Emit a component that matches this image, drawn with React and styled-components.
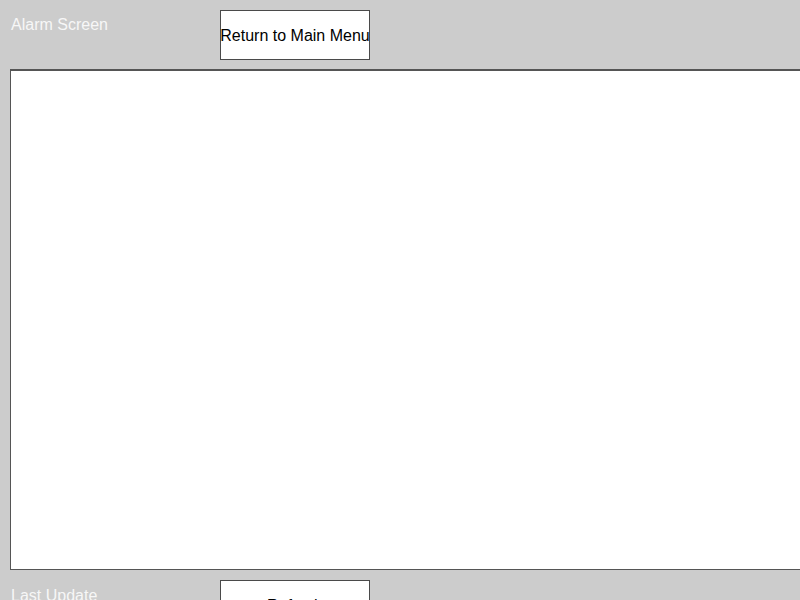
import styled, { createGlobalStyle } from 'styled-components';

const GlobalStyle = createGlobalStyle`
  html, body {
    margin: 0;
    padding: 0;
    width: 800px;
    height: 600px;
    overflow: hidden;
    background: #cccccc;
    font-family: "Liberation Sans", Arial, sans-serif;
  }
`;

const Screen = styled.div`
  display: flex;
  flex-direction: column;
  gap: 10px;
  padding: 10px;
  width: 800px;
  box-sizing: border-box;
`;

const Row = styled.div`
  display: flex;
  align-items: flex-start;
`;

const Label = styled.div`
  width: 209px;
  padding: ${(props) => props.offset || 6}px 0 0 1px;
  color: #f7f7f7;
  font-size: 16px;
  line-height: 18px;
`;

const Botao = styled.button`
  width: 150px;
  height: 50px;
  padding: 2px 0 0 0;
  margin: 0;
  box-sizing: border-box;
  border: 1px solid #4a4a4a;
  background: #ffffff;
  color: #000000;
  font-family: "Liberation Sans", Arial, sans-serif;
  font-size: 16px;
  white-space: nowrap;
  display: flex;
  align-items: center;
  justify-content: center;
  cursor: pointer;
`;

const Painel = styled.div`
  width: 800px;
  height: 501px;
  box-sizing: border-box;
  border: 1px solid #555555;
  border-top-width: 2px;
  margin-top: -1px;
  background: #ffffff;
  flex-shrink: 0;
`;

export default function App() {
  return (
    <>
      <GlobalStyle />
      <Screen>
        <Row>
          <Label>Alarm Screen</Label>
          <Botao>Return to Main Menu</Botao>
        </Row>
        <Painel />
        <Row>
          <Label offset={7}>Last Update</Label>
          <Botao>Refresh</Botao>
        </Row>
      </Screen>
    </>
  );
}
